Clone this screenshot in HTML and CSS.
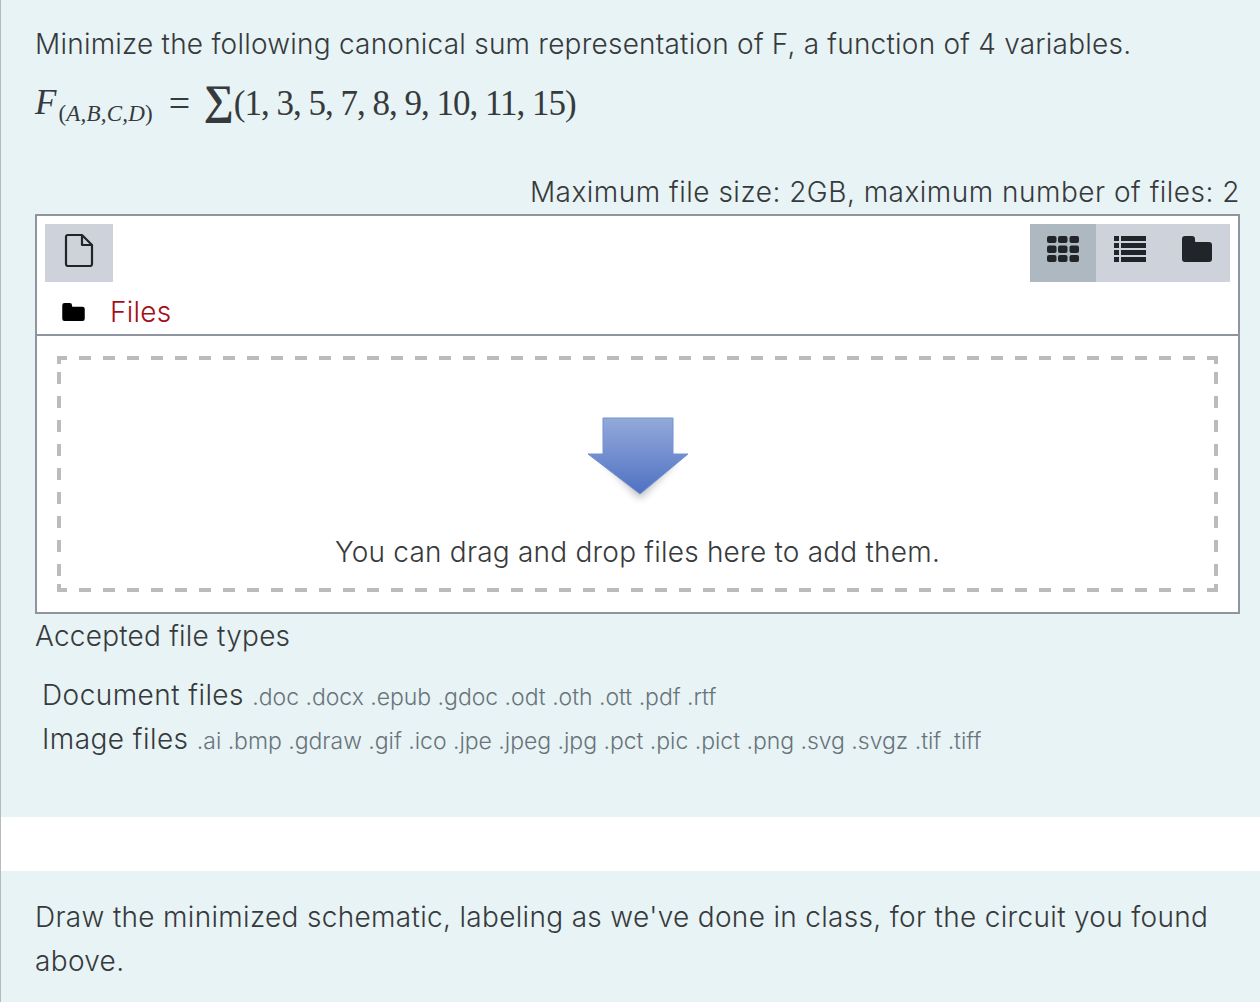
FILE: index.html
```html
<!DOCTYPE html>
<html lang="en">
<head>
  <meta charset="UTF-8">
  <title>Question</title>
  <link rel="stylesheet" href="styles.css">
</head>
<body>
  <div class="panel first">
    <p class="line">Minimize the following canonical sum representation of F, a function of 4 variables.</p>
    <p class="math"><i>F</i><span class="sub">(<i>A,B,C,D</i>)</span><span class="eq">=</span><span class="sum">∑</span><span class="nums">(1, 3, 5, 7, 8, 9, 10, 11, 15)</span></p>
    <div class="limits">Maximum file size: 2GB, maximum number of files: 2</div>
    <div class="picker">
      <div class="toolbar">
        <div class="btn add">
          <svg width="30" height="34" viewBox="0 0 30 34"><path d="M4 2h14l10 10v19a2 2 0 0 1-2 2H4a2 2 0 0 1-2-2V4a2 2 0 0 1 2-2z M18 2v10h10" fill="none" stroke="#212529" stroke-width="2.200" stroke-linejoin="round"/></svg>
        </div>
        <div class="views">
          <div class="btn view active">
            <svg width="32" height="26" viewBox="0 0 32 26" fill="#212529">
              <rect y="0" width="9.500" height="7" rx="2"/><rect x="11" y="0" width="9.500" height="7" rx="2"/><rect x="22.500" y="0" width="9.500" height="7" rx="2"/>
              <rect y="9.500" width="9.500" height="7.500" rx="2"/><rect x="11" y="9.500" width="9.500" height="7.500" rx="2"/><rect x="22.500" y="9.500" width="9.500" height="7.500" rx="2"/>
              <rect y="19" width="9.500" height="7" rx="2"/><rect x="11" y="19" width="9.500" height="7" rx="2"/><rect x="22.500" y="19" width="9.500" height="7" rx="2"/>
            </svg>
          </div>
          <div class="btn view">
            <svg width="32" height="26" viewBox="0 0 32 26" fill="#212529">
              <rect y="0" width="5" height="5"/><rect x="7" y="0" width="25" height="5"/>
              <rect y="7" width="5" height="5"/><rect x="7" y="7" width="25" height="5"/>
              <rect y="14" width="5" height="5"/><rect x="7" y="14" width="25" height="5"/>
              <rect y="21" width="5" height="5"/><rect x="7" y="21" width="25" height="5"/>
            </svg>
          </div>
          <div class="btn view">
            <svg width="30" height="26" viewBox="0 0 30 26"><path d="M3 0h7a3 3 0 0 1 3 3v2a1 1 0 0 0 1 1h13a3 3 0 0 1 3 3v14a3 3 0 0 1-3 3H3a3 3 0 0 1-3-3V3a3 3 0 0 1 3-3z" fill="#212529"/></svg>
          </div>
        </div>
      </div>
      <div class="path">
        <svg width="23" height="18" viewBox="0 0 30 24"><path d="M3 0h7a3 3 0 0 1 3 3v1a1 1 0 0 0 1 1h13a3 3 0 0 1 3 3v13a3 3 0 0 1-3 3H3a3 3 0 0 1-3-3V3a3 3 0 0 1 3-3z" fill="#000"/></svg>
        <a class="crumb">Files</a>
      </div>
      <div class="drop-wrap">
        <div class="dropzone">
          <svg class="arrow" width="112" height="90" viewBox="0 0 112 90">
            <defs>
              <linearGradient id="arrowFill" x1="0" y1="0" x2="0" y2="1">
                <stop offset="0" stop-color="#93aad9"/>
                <stop offset="1" stop-color="#4f71c4"/>
              </linearGradient>
              <filter id="arrowShadow" x="-20%" y="-20%" width="140%" height="150%">
                <feGaussianBlur stdDeviation="4"/>
              </filter>
            </defs>
            <path d="M20 46L56 84L92 46z" fill="#000" opacity=".28" filter="url(#arrowShadow)"/>
            <path d="M19 3h70v36h15L56 79 4 39h15z" fill="url(#arrowFill)" stroke="#7391d2" stroke-width="1"/>
          </svg>
          <div class="drop-text">You can drag and drop files here to add them.</div>
        </div>
      </div>
    </div>
    <div class="accepted">Accepted file types</div>
    <ul class="types">
      <li>Document files <small>.doc .docx .epub .gdoc .odt .oth .ott .pdf .rtf</small></li>
      <li>Image files <small>.ai .bmp .gdraw .gif .ico .jpe .jpeg .jpg .pct .pic .pict .png .svg .svgz .tif .tiff</small></li>
    </ul>
  </div>
  <div class="gap"></div>
  <div class="panel second">
    <p class="line">Draw the minimized schematic, labeling as we've done in class, for the circuit you found above.</p>
  </div>
</body>
</html>
```

FILE: styles.css
```css
html, body {
  height: 1002px;
  overflow: hidden;
}
body {
  margin: 0;
  background: #fff;
  border-left: 1px solid #b4bcc0;
  font-family: Inter, "Liberation Sans", sans-serif;
  font-weight: 300;
  font-size: 28px;
  line-height: 44px;
  letter-spacing: 0.22px;
  color: #373a3c;
}
.panel {
  background: #e7f3f5;
  padding: 0 20px 0 34px;
}
.first {
  height: 817px;
  box-sizing: border-box;
  padding-top: 22px;
}
.second {
  padding-top: 24px;
  height: 131px;
  box-sizing: border-box;
}
.second .line {
  letter-spacing: 0.32px;
}
.gap {
  height: 54px;
}
p {
  margin: 0;
}
.math {
  margin-top: 15px;
  height: 44px;
  font-family: "Liberation Serif", serif;
  font-weight: 400;
  font-size: 35px;
  letter-spacing: 0;
  white-space: nowrap;
}
.sub {
  font-size: 23px;
  position: relative;
  top: 7px;
  margin-left: 2px;
  letter-spacing: 0.2px;
}
.eq {
  display: inline-block;
  width: 21px;
  margin: 0 14px 0 16px;
  font-size: 38px;
  line-height: 0;
  vertical-align: -2px;
}
.sum {
  font-size: 42px;
  font-weight: 700;
  line-height: 0;
}
.nums {
  letter-spacing: -1px;
  vertical-align: -1px;
}
.limits {
  margin-top: 45px;
  text-align: right;
  letter-spacing: 0.5px;
}
.picker {
  background: #fff;
  border: 2px solid #8f959e;
  height: 400px;
  box-sizing: border-box;
}
.toolbar {
  display: flex;
  justify-content: space-between;
  padding: 8px 8px 0;
}
.btn {
  display: flex;
  align-items: center;
  justify-content: center;
  height: 58px;
  box-sizing: border-box;
  padding-bottom: 8px;
  background: #ced3db;
}
.add {
  width: 68px;
  padding-bottom: 6px;
}
.views {
  display: flex;
}
.view {
  width: 67px;
}
.view.active {
  width: 66px;
  background: #adb8c1;
}
.path {
  display: flex;
  align-items: center;
  height: 45px;
  padding: 7px 0 0 25px;
  border-bottom: 2px solid #8f959e;
}
.crumb {
  margin-left: 25px;
  color: #a30f19;
}
.drop-wrap {
  padding: 20px 20px 0;
}
.dropzone {
  height: 236px;
  display: flex;
  flex-direction: column;
  align-items: center;
  background:
    linear-gradient(#bbb, #bbb) left top / 4px 8px no-repeat,
    linear-gradient(#bbb, #bbb) right top / 4px 8px no-repeat,
    linear-gradient(#bbb, #bbb) left bottom / 4px 8px no-repeat,
    linear-gradient(#bbb, #bbb) right bottom / 4px 8px no-repeat,
    repeating-linear-gradient(to right, #bbb 0 10px, transparent 10px 22px, #bbb 22px 24px) left top / 100% 4px no-repeat,
    repeating-linear-gradient(to right, #bbb 0 10px, transparent 10px 22px, #bbb 22px 24px) left bottom / 100% 4px no-repeat,
    repeating-linear-gradient(to bottom, #bbb 0 4px, transparent 4px 16px, #bbb 16px 24px) left top / 4px 100% no-repeat,
    repeating-linear-gradient(to bottom, #bbb 0 4px, transparent 4px 16px, #bbb 16px 24px) right top / 4px 100% no-repeat;
}
.arrow {
  margin: 59px 0 0 5px;
}
.drop-text {
  margin-top: 25px;
}
.types {
  list-style: none;
  margin: 15px 0 0;
  padding: 0 0 0 7px;
  letter-spacing: 0.45px;
}
.types li {
  height: 44px;
}
.types small {
  font-size: 23px;
  letter-spacing: -0.03px;
  color: #6a737b;
}
```
